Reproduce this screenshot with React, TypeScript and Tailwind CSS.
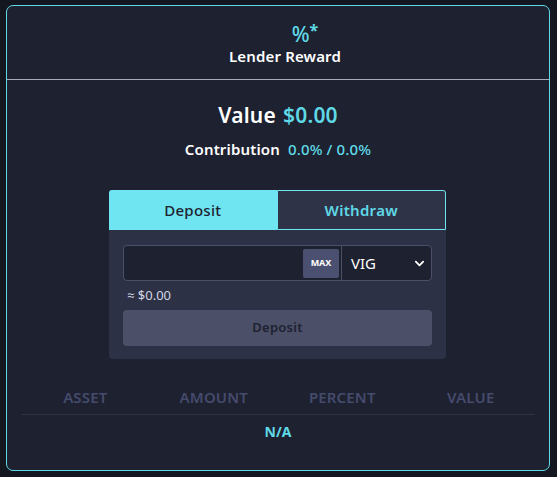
import React from "react";

const font = { fontFamily: '"Noto Sans", "Open Sans", sans-serif' };

export default function App() {
  return (
    <div className="min-h-[477px] w-[557px] bg-[#141720] pt-[5px] pl-[6px]" style={font}>
      <div className="flex h-[466px] w-[544px] flex-col rounded-[7px] border border-[#5fd9e6] bg-[#1e2130]">
        {/* header */}
        <div className="flex h-[74px] flex-col items-center justify-center border-b border-[#a7abb6] pt-[3px] pl-[14px]">
          <div className="ml-[40px] flex items-start text-[#5fd9e6]">
            <span className="text-[21px] leading-[24px] font-medium">%</span>
            <span className="text-[16px] leading-[16px] font-bold">*</span>
          </div>
          <div className="text-[15px] leading-[20px] font-semibold tracking-[0.01em] text-white">Lender Reward</div>
        </div>

        {/* summary */}
        <div className="mt-[20px] flex items-center justify-center gap-[7px] text-[21px] leading-[30px] font-semibold tracking-[0.01em]">
          <span className="text-white">Value</span>
          <span className="text-[#5fd9e6]">$0.00</span>
        </div>
        <div className="mt-[9px] flex items-center justify-center gap-[8px] text-[15px] leading-[20px] font-semibold tracking-[0.01em]">
          <span className="text-white">Contribution</span>
          <span className="font-medium text-[#5fd9e6]">0.0% / 0.0%</span>
        </div>

        {/* deposit / withdraw panel */}
        <div className="mt-[31px] ml-[102px] w-[337px] rounded-b-[4px] bg-[#2d3145]">
          <div className="flex h-[40px]">
            <button className="flex-1 rounded-tl-[3px] bg-[#6ee5f0] text-[15px] font-medium tracking-[0.02em] text-[#1e2130]">
              Deposit
            </button>
            <button className="flex-1 rounded-tr-[3px] border border-[#6ee5f0] bg-[#2f3348] text-[15px] font-semibold tracking-[0.02em] text-[#5fd9e6]">
              Withdraw
            </button>
          </div>
          <div className="px-[14px] pt-[15px] pb-[13px]">
            <div className="flex h-[36px] rounded-[4px] border border-[#4b5068] bg-[#1e2130]">
              <div className="flex flex-1 items-center justify-end pr-[2px]">
                <span className="flex h-[29px] w-[36px] items-center justify-center rounded-[2px] bg-[#4b5070] text-[9px] font-bold text-white">
                  MAX
                </span>
              </div>
              <div className="flex w-[90px] items-center justify-between border-l border-[#4b5068] pr-[6px] pl-[9px]">
                <span className="text-[15px] text-white">VIG</span>
                <svg width="11" height="11" viewBox="0 0 12 12">
                  <path d="M2 4l4 4 4-4" fill="none" stroke="white" strokeWidth="2" strokeLinecap="round" strokeLinejoin="round" />
                </svg>
              </div>
            </div>
            <div className="mt-[6px] pl-[4px] text-[13px] leading-[16px] text-[#d2d5e4]">≈ $0.00</div>
            <button className="mt-[7px] flex h-[36px] w-full items-center justify-center rounded-[4px] bg-[#4b5068] text-[13px] font-semibold tracking-[0.02em] text-[#1e2130]">
              Deposit
            </button>
          </div>
        </div>

        {/* holdings table */}
        <div className="mx-[14px] mt-[27px]">
          <div className="grid grid-cols-4 border-b border-[#2e3246] pb-[6px] text-center text-[15px] font-semibold leading-[22px] tracking-[0.01em] text-[#454b6c]">
            <span>ASSET</span>
            <span>AMOUNT</span>
            <span>PERCENT</span>
            <span>VALUE</span>
          </div>
          <div className="pt-[7px] text-center text-[14px] font-bold leading-[20px] text-[#5fd9e6]">N/A</div>
        </div>
      </div>
    </div>
  );
}
